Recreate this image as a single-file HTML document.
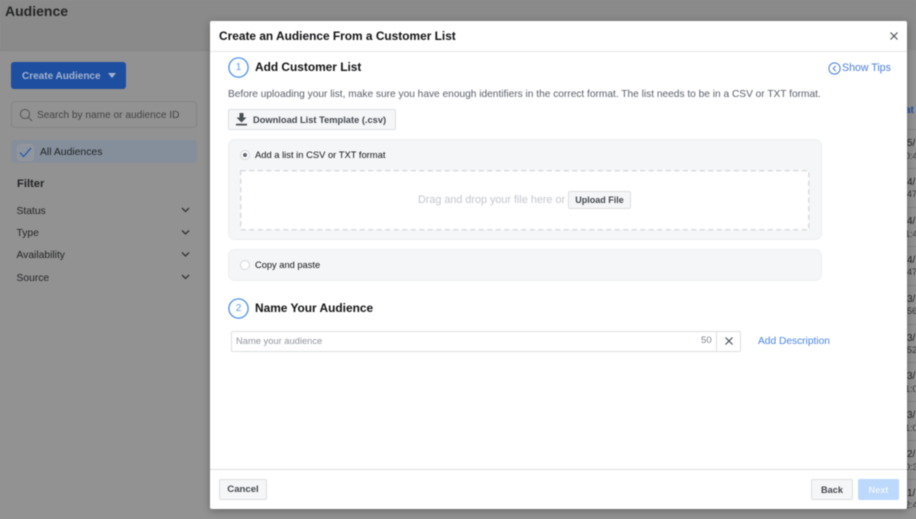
<!DOCTYPE html>
<html><head><meta charset="utf-8">
<style>
html,body{margin:0;padding:0;width:916px;height:519px;overflow:hidden;background:#929292}
#r{position:relative;width:916px;height:519px;overflow:hidden;font-family:"Liberation Sans",sans-serif;filter:blur(.4px)}
.a{position:absolute;white-space:nowrap}
.bg{color:#242527}
.m{color:#111214}
.btn{position:absolute;box-sizing:border-box;background:#f5f6f7;border:1px solid #dddfe2;border-radius:2px;font-weight:bold;font-size:9.6px;color:#44484f;text-align:center}
.s{font-size:9px;color:#333}
.l{position:absolute;left:907px;width:9px;height:1px;background:#828282}
</style></head><body><div id="r">
<div class="a" style="left:0;top:0;width:916px;height:50px;background:#8a8a8a"></div>
<div class="a" style="left:0;top:50px;width:210px;height:1px;background:#838383"></div>
<div class="a bg" style="left:5px;top:2px;font-size:14px;font-weight:bold;line-height:18px">Audience</div>
<div class="a" style="left:11px;top:62px;width:115px;height:27px;background:#1e4ea0;border-radius:3px"></div>
<div class="a" style="left:22px;top:70px;font-size:10px;font-weight:bold;color:#a3b3cf;line-height:13px">Create Audience</div>
<svg class="a" style="left:108px;top:73px" width="8" height="5"><path d="M0 0H8L4 5Z" fill="#a3b3cf"/></svg>
<div class="a" style="left:11px;top:101px;width:186px;height:27px;box-sizing:border-box;border:1px solid #848484;border-radius:4px"></div>
<svg class="a" style="left:19px;top:108px" width="14" height="14" fill="none" stroke="#555" stroke-width="1"><circle cx="6" cy="6" r="4.6"/><path d="M9.5 9.5L13 13"/></svg>
<div class="a" style="left:37px;top:109px;font-size:10.15px;color:#444;line-height:13px">Search by name or audience ID</div>
<div class="a" style="left:11px;top:140px;width:186px;height:23px;background:#858e9b;border-radius:4px"></div>
<div class="a" style="left:17px;top:144px;width:17px;height:17px;box-sizing:border-box;border:1px solid #979797;border-radius:3px;background:#8f959e"></div>
<svg class="a" style="left:19px;top:147px" width="13" height="11" fill="none" stroke="#1f55b0" stroke-width="1.2"><path d="M1 5.5L4.5 9.5L12 1"/></svg>
<div class="a bg" style="left:40px;top:146px;font-size:10.4px;line-height:13px">All Audiences</div>
<div class="a bg" style="left:17px;top:176.5px;font-size:11.2px;font-weight:bold;line-height:14px">Filter</div>
<div class="a bg" style="left:16.5px;top:204.5px;font-size:10.3px;line-height:13px">Status</div>
<div class="a bg" style="left:16.5px;top:226.5px;font-size:10.3px;line-height:13px">Type</div>
<div class="a bg" style="left:16.5px;top:249px;font-size:10.3px;line-height:13px">Availability</div>
<div class="a bg" style="left:16.5px;top:271.5px;font-size:10.3px;line-height:13px">Source</div>
<svg class="a" style="left:181px;top:207px" width="9" height="76" fill="none" stroke="#333" stroke-width="1.3"><path d="M1 1L4.5 4.5L8 1M1 23.5L4.5 27L8 23.5M1 45.5L4.5 49L8 45.5M1 68L4.5 71.5L8 68"/></svg>

<!-- right strip -->
<div class="a" style="left:905px;top:105px;font-size:10px;font-weight:bold;color:#1f4fa3;line-height:12px">at</div>
<div class="l" style="top:129px"></div><div class="l" style="top:168px"></div><div class="l" style="top:207px"></div><div class="l" style="top:246px"></div><div class="l" style="top:285px"></div><div class="l" style="top:324px"></div><div class="l" style="top:362px"></div><div class="l" style="top:401px"></div><div class="l" style="top:440px"></div><div class="l" style="top:479px"></div>
<div class="a bg" style="left:907px;top:138px;font-size:10px">5/</div><div class="a s" style="left:905px;top:151px">0:4</div>
<div class="a bg" style="left:907px;top:177px;font-size:10px">4/</div><div class="a s" style="left:907px;top:189px">47</div>
<div class="a bg" style="left:907px;top:216px;font-size:10px">4/</div><div class="a s" style="left:905px;top:229px">1:4</div>
<div class="a bg" style="left:907px;top:255px;font-size:10px">4/</div><div class="a s" style="left:907px;top:267px">47</div>
<div class="a bg" style="left:907px;top:294px;font-size:10px">3/</div><div class="a s" style="left:907px;top:306px">56</div>
<div class="a bg" style="left:907px;top:333px;font-size:10px">3/</div><div class="a s" style="left:907px;top:345px">52</div>
<div class="a bg" style="left:907px;top:371px;font-size:10px">3/</div><div class="a s" style="left:905px;top:384px">1:0</div>
<div class="a bg" style="left:907px;top:410px;font-size:10px">3/</div><div class="a s" style="left:905px;top:423px">1:0</div>
<div class="a bg" style="left:907px;top:449px;font-size:10px">2/</div><div class="a s" style="left:905px;top:462px">0:3</div>
<div class="a bg" style="left:907px;top:488px;font-size:10px">1/</div><div class="a s" style="left:905px;top:500px">2:4</div>

<!-- modal -->
<div class="a" style="left:210px;top:21px;width:697px;height:488px;background:#fff;border-radius:2px;box-shadow:0 2px 8px rgba(0,0,0,.3)"></div>
<div class="a" style="left:210px;top:51px;width:697px;height:1px;background:#e5e6e9"></div>
<div class="a" style="left:210px;top:469px;width:697px;height:1px;background:#dddfe2"></div>
<div class="a m" style="left:219px;top:28.5px;font-size:11.9px;font-weight:bold;line-height:15px">Create an Audience From a Customer List</div>
<svg class="a" style="left:890px;top:32px" width="8" height="8" fill="none" stroke="#4b4f56" stroke-width="1.2"><path d="M.5 .5L7.5 7.5M7.5 .5L.5 7.5"/></svg>

<svg class="a" style="left:228px;top:57px" width="21" height="21"><circle cx="10.5" cy="10.5" r="9.6" fill="#fff" stroke="#4a90f0" stroke-width="1.3"/></svg>
<div class="a" style="left:228px;top:62px;width:21px;text-align:center;font-size:10px;line-height:12px;color:#5b9cf2">1</div>
<div class="a m" style="left:255px;top:60px;font-size:11.9px;font-weight:bold;line-height:15px">Add Customer List</div>
<svg class="a" style="left:828px;top:62px" width="13" height="13" fill="none" stroke="#4a7fd8" stroke-width="1"><circle cx="6.5" cy="6.5" r="5.6"/><path d="M7.8 3.8L5.2 6.5L7.8 9.2"/></svg>
<div class="a" style="left:842px;top:62px;font-size:10.6px;line-height:13px;color:#4a7fd8">Show Tips</div>
<div class="a" style="left:228px;top:88.5px;font-size:10.17px;line-height:12px;color:#5a6069">Before uploading your list, make sure you have enough identifiers in the correct format. The list needs to be in a CSV or TXT format.</div>

<div class="btn" style="left:228px;top:109px;width:168px;height:21px"></div>
<svg class="a" style="left:236px;top:113px" width="11" height="13" fill="#4b4f56"><path d="M3.5 0H7.5V4.5H10.5L5.5 9.5L.5 4.5H3.5ZM0 10.8H11V12.5H0Z"/></svg>
<div class="a" style="left:253px;top:114px;font-size:9.3px;font-weight:bold;line-height:12px;color:#44484f">Download List Template (.csv)</div>

<div class="a" style="left:228px;top:139px;width:594px;height:101px;box-sizing:border-box;background:#f5f6f7;border:1px solid #eceef0;border-radius:7px"></div>
<div class="a" style="left:240px;top:150px;width:10px;height:10px;box-sizing:border-box;border-radius:50%;background:#fff;border:1px solid #d5d7da"></div>
<div class="a" style="left:243px;top:153px;width:4px;height:4px;border-radius:50%;background:#606770"></div>
<div class="a m" style="left:255px;top:149px;font-size:9.4px;line-height:12px">Add a list in CSV or TXT format</div>
<svg class="a" style="left:240px;top:170px" width="570" height="61"><rect x=".75" y=".75" width="568" height="59" fill="#fff" stroke="#d3d5d9" stroke-width="1.2" stroke-dasharray="5 3.5"/></svg>
<div class="a" style="left:418px;top:194px;font-size:10.8px;line-height:13px;color:#c4c6ca">Drag and drop your file here or</div>
<div class="btn" style="left:568px;top:191px;width:63px;height:18px;line-height:17px;font-size:9px">Upload File</div>

<div class="a" style="left:228px;top:249px;width:594px;height:32px;box-sizing:border-box;background:#f5f6f7;border:1px solid #eceef0;border-radius:7px"></div>
<div class="a" style="left:240px;top:260px;width:10px;height:10px;box-sizing:border-box;border-radius:50%;background:#fff;border:1px solid #d5d7da"></div>
<div class="a m" style="left:255px;top:259px;font-size:9.3px;line-height:12px">Copy and paste</div>

<svg class="a" style="left:228px;top:298px" width="21" height="21"><circle cx="10.5" cy="10.5" r="9.6" fill="#fff" stroke="#4a90f0" stroke-width="1.3"/></svg>
<div class="a" style="left:228px;top:303px;width:21px;text-align:center;font-size:10px;line-height:12px;color:#5b9cf2">2</div>
<div class="a m" style="left:255px;top:301px;font-size:11.9px;font-weight:bold;line-height:15px">Name Your Audience</div>

<div class="a" style="left:231px;top:331px;width:510px;height:21px;box-sizing:border-box;background:#fff;border:1px solid #dddfe2;border-radius:2px"></div>
<div class="a" style="left:716px;top:332px;width:1px;height:19px;background:#dddfe2"></div>
<div class="a" style="left:236px;top:335px;font-size:9.35px;line-height:12px;color:#90949c">Name your audience</div>
<div class="a" style="left:701px;top:335px;font-size:9.6px;line-height:12px;color:#7f838a">50</div>
<svg class="a" style="left:725px;top:337px" width="8" height="8" fill="none" stroke="#4b4f56" stroke-width="1.2"><path d="M.5 .5L7.5 7.5M7.5 .5L.5 7.5"/></svg>
<div class="a" style="left:758px;top:335px;font-size:10.2px;line-height:13px;color:#4a85e8">Add Description</div>

<div class="btn" style="left:219px;top:479px;width:48px;height:21px;line-height:20px">Cancel</div>
<div class="btn" style="left:811px;top:479px;width:42px;height:21px;line-height:20px;font-size:9.2px">Back</div>
<div class="btn" style="left:858px;top:479px;width:41px;height:21px;line-height:20px;font-size:9.2px;background:#bcd8fb;border-color:#bcd8fb;color:#edf4fe">Next</div>
</div></body></html>
